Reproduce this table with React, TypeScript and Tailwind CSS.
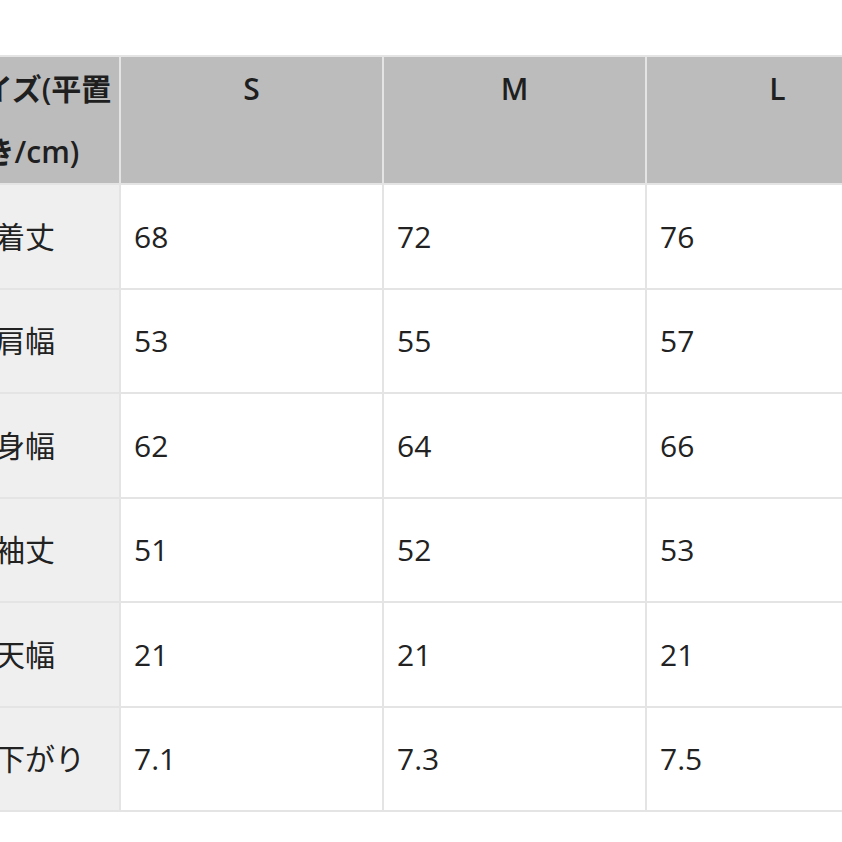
const sizes = ["S", "M", "L"];

const rows: { label: string; values: string[] }[] = [
  { label: "着丈", values: ["68", "72", "76"] },
  { label: "肩幅", values: ["53", "55", "57"] },
  { label: "身幅", values: ["62", "64", "66"] },
  { label: "袖丈", values: ["51", "52", "53"] },
  { label: "天幅", values: ["21", "21", "21"] },
  { label: "下がり", values: ["7.1", "7.3", "7.5"] },
];

const App: React.FC = () => {
  return (
    <div
      className="w-[842px] h-[842px] overflow-hidden bg-white pt-[55px]"
      style={{ fontFamily: '"Open Sans", "Noto Sans CJK JP", sans-serif' }}
    >
      <div className="ml-[-57px] w-max grid grid-cols-[174px_261px_261px_261px] grid-rows-[126px_repeat(6,102.5px)] gap-[2px] p-[2px] bg-[#e4e4e4] text-[30px]">
        <div className="bg-[#bcbcbc] font-semibold text-[#1f1f1f] text-center leading-[63px] whitespace-nowrap">
          サイズ(平置
          <br />
          き/cm)
        </div>
        {sizes.map((s) => (
          <div key={s} className="bg-[#bcbcbc] font-semibold text-[#1f1f1f] text-center leading-[63px]">
            {s}
          </div>
        ))}
        {rows.map((row) => (
          <>
            <div key={row.label} className="bg-[#efefef] flex items-center pl-[50px] text-[#222] whitespace-nowrap">
              {row.label}
            </div>
            {row.values.map((v, i) => (
              <div key={row.label + i} className="bg-white flex items-center pl-[13px] text-[#222]">
                {v}
              </div>
            ))}
          </>
        ))}
      </div>
    </div>
  );
};

export default App;
